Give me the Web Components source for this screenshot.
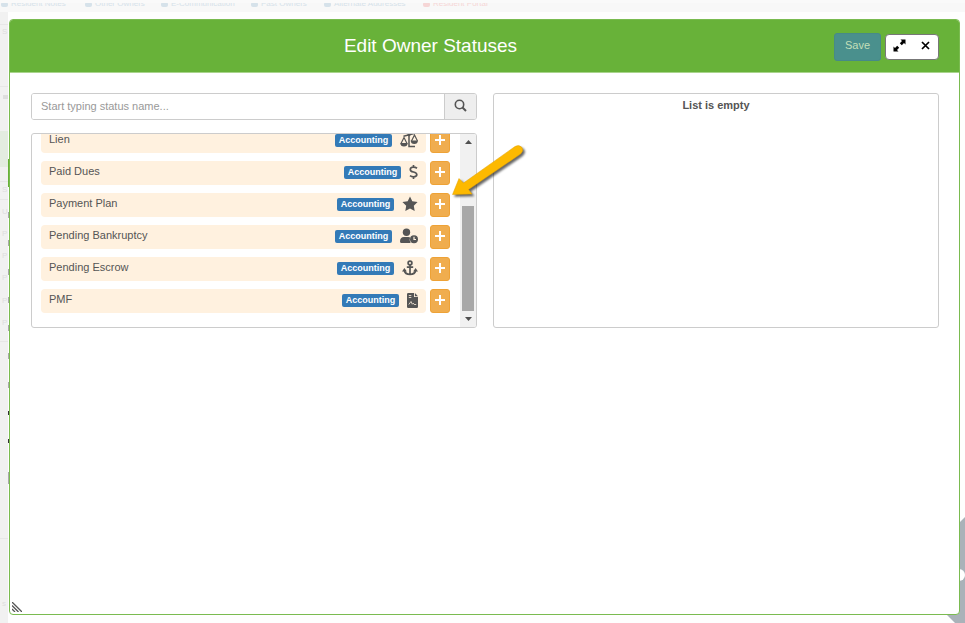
<!DOCTYPE html>
<html lang="en">
<head>
<meta charset="utf-8">
<title>Edit Owner Statuses</title>
<style>
	html, body {
		height: 100%;
		margin: 0;
	}

	body {
		position: relative;
		overflow: hidden;
		background: #f1f1f1;
		color: #555;
		font: 11px/16px "Liberation Sans", sans-serif;
	}

	.column {
		display: grid;
		gap: 13px;
	}
</style>
</head>
<body>

<template id="page-backdrop-tmpl">
	<style>
		:host {
			position: absolute;
			inset: 0;
			overflow: hidden;
			font: 8px/8px "Liberation Sans", sans-serif;
			color: #d6e2ea;
		}

		nav {
			position: absolute;
			left: 0;
			right: 0;
			top: 0;
			height: 12px;
			background: #f8f8f8;
		}

		nav::after {
			content: "";
			position: absolute;
			left: 0;
			right: 0;
			top: 0;
			height: 3px;
			background: #fafafa;
		}

		nav span {
			position: absolute;
			top: 0;
			white-space: nowrap;
		}

		nav span::before {
			content: "";
			position: absolute;
			left: -10px;
			top: 2px;
			width: 7px;
			height: 5px;
			border-radius: 2px;
			background: currentColor;
		}

		nav .red {
			color: #f6d6d6;
		}

		.sheet {
			position: absolute;
			left: 8px;
			right: 0;
			top: 12px;
			bottom: 0;
			background: #fefefe;
		}

		.letters span {
			position: absolute;
			left: 2px;
			color: #dedede;
		}

		svg {
			position: absolute;
			left: 0;
			top: 0;
		}

		.corner {
			left: auto;
			top: auto;
			right: 0;
			bottom: 0;
		}
	</style>

	<nav>
		<span style="left: 11px">Resident Notes</span>
		<span style="left: 95px">Other Owners</span>
		<span style="left: 171px">E-Communication</span>
		<span style="left: 261px">Past Owners</span>
		<span style="left: 334px">Alternate Addresses</span>
		<span class="red" style="left: 433px">Resident Portal</span>
	</nav>
	<div class="sheet"></div>
	<svg width="10" height="623" aria-hidden="true">
		<path fill="#e3ece0" d="M0 131h8v36H0z"/>
		<path fill="#68b239" d="M8 159h2v28H8z"/>
		<path fill="#e7e7e7" d="M0 24h8v1H0zM0 86h8v1H0zM0 181h8v1H0zM0 199h8v1H0zM0 341h8v1H0zM0 538h8v1H0z"/>
		<path fill="#dedede" d="M3 95h5v4H3z"/>
		<path fill="#aaa" d="M8 212h1v6H8zM8 240h1v6H8zM8 269h1v6H8zM8 297h1v6H8zM8 325h1v6H8zM8 353h1v6H8zM8 382h1v6H8zM8 472h1v12H8z"/>
		<path fill="#333" d="M8 411h1v4H8zM8 439h1v4H8z"/>
	</svg>
	<div class="letters">
		<span style="top: 28px">S</span>
		<span style="top: 186px">S</span>
		<span style="top: 208px">U</span>
		<span style="top: 230px">P</span>
		<span style="top: 252px">P</span>
		<span style="top: 274px">P</span>
		<span style="top: 297px">P</span>
		<span style="top: 319px">P</span>
		<span style="top: 600px">s</span>
	</div>
	<svg class="corner" width="20" height="108" aria-hidden="true">
		<path fill="#aab2b9" d="M20 2 0 22v76l10 10h10z"/>
		<circle cx="14" cy="60" r="6" fill="#fff"/>
	</svg>
</template>

<template id="status-dialog-tmpl">
	<style>
		:host {
			position: relative;
			display: flex;
			flex-direction: column;
			box-sizing: border-box;
			height: calc(100% - 27px);
			margin: 19px 5px 8px 9px;
			border: 1px solid #7abb50;
			border-radius: 4px;
			background: #fff;
			overflow: hidden;
		}

		header {
			display: flex;
			align-items: center;
			box-sizing: border-box;
			height: 53px;
			padding: 2px 20px 0 21px;
			gap: 4px;
			background: #68b239;
			border-bottom: 1px solid #a9d48c;
		}

		h1 {
			flex: 1;
			margin: 0;
			padding-bottom: 2px;
			color: #fff;
			font: 19px/24px "Liberation Sans", sans-serif;
			text-align: center;
		}

		button {
			border: 0;
			padding: 0;
			font: inherit;
		}

		.save {
			width: 47px;
			height: 28px;
			padding-bottom: 4px;
			border: 1px solid #478a88;
			border-radius: 3px;
			background: #4a908d;
			color: #c3dfb8;
		}

		.tools {
			display: flex;
			box-sizing: border-box;
			width: 54px;
			height: 26px;
			border: 1px solid #777;
			border-radius: 4px;
			background: #fff;
		}

		.tools button {
			flex: 1;
			background: none;
		}

		.tools svg {
			display: block;
			margin: -4px auto 0;
		}

		main {
			display: grid;
			grid-template-columns: 1fr 1fr;
			gap: 16px;
			padding: 20px 20px 20px 21px;
		}

		.grip {
			position: absolute;
			left: 2px;
			bottom: 2px;
		}
	</style>

	<header>
		<h1><slot name="title"></slot></h1>
		<button class="save" type="button" disabled>Save</button>
		<div class="tools">
			<button type="button" aria-label="Expand">
				<svg width="13" height="13" viewBox="0 0 13 13">
					<path d="M7.500.5h5v5L11 4 8.800 6.200 6.800 4.200 9 2zM5.500 12.500h-5v-5L2 9l2.200-2.200 2 2L4 11z"/>
				</svg>
			</button>
			<button type="button" aria-label="Close">
				<svg width="9" height="9" viewBox="0 0 9 9">
					<path stroke="#000" stroke-width="1.700" d="m1 1 7 7M8 1 1 8"/>
				</svg>
			</button>
		</div>
	</header>
	<main><slot></slot></main>
	<svg class="grip" width="10" height="10" aria-hidden="true">
		<path stroke="#555" stroke-width="1.300" d="M0 0l10 10M0 3.500 6.500 10M0 7l3 3"/>
	</svg>
</template>

<template id="status-search-tmpl">
	<style>
		:host {
			display: flex;
			box-sizing: border-box;
			height: 27px;
			border: 1px solid #ccc;
			border-radius: 3px;
			overflow: hidden;
		}

		input {
			flex: 1;
			min-width: 0;
			border: 0;
			padding: 0 9px 2px;
			outline: 0;
			color: #555;
			font: inherit;
		}

		input::placeholder {
			color: #999;
		}

		button {
			width: 32px;
			padding: 0;
			border: 0;
			border-left: 1px solid #ccc;
			background: #eee;
		}

		svg {
			display: block;
			margin: -2px auto 0;
		}
	</style>

	<input type="text" aria-label="Status name" placeholder="Start typing status name...">
	<button type="button" aria-label="Search">
		<svg width="13" height="13" viewBox="0 0 13 13" fill="none" stroke="#555">
			<circle cx="5.500" cy="5.500" r="4.200" stroke-width="1.600"/>
			<path stroke-width="2" d="m8.500 8.500 3.500 3.500"/>
		</svg>
	</button>
</template>

<template id="status-panel-tmpl">
	<style>
		:host {
			display: flex;
			box-sizing: border-box;
			height: 195px;
			border: 1px solid #ccc;
			border-radius: 3px;
			overflow: hidden;
		}

		:host([empty]) {
			height: auto;
			justify-content: center;
			padding-top: 3px;
			font-weight: bold;
		}

		.rows {
			flex: 1;
			display: flex;
			flex-direction: column;
			justify-content: flex-end;
			gap: 8px;
			padding: 0 10px 14px 9px;
		}

		.bar {
			display: flex;
			flex-direction: column;
			align-items: center;
			box-sizing: border-box;
			width: 16px;
			padding: 6px 0;
			background: #f1f1f1;
		}

		.thumb {
			width: 12px;
			height: 105px;
			margin: auto 0 6px;
			background: #a8a8a8;
		}

		:host([empty]) .rows {
			display: block;
			padding: 0;
			text-align: center;
		}

		:host([empty]) .bar {
			display: none;
		}
	</style>

	<div class="rows"><slot></slot></div>
	<div class="bar" aria-hidden="true">
		<svg width="7" height="4"><path fill="#505050" d="M0 4 3.500 0 7 4z"/></svg>
		<div class="thumb"></div>
		<svg width="7" height="4"><path fill="#505050" d="M0 0h7L3.500 4z"/></svg>
	</div>
</template>

<template id="status-row-tmpl">
	<style>
		:host {
			flex: none;
			display: flex;
			gap: 4px;
			height: 24px;
		}

		.item {
			flex: 1;
			display: flex;
			align-items: center;
			gap: 8px;
			padding: 0 8px 2px;
			border-radius: 4px;
			background: #fff1df;
		}

		.name {
			flex: 1;
			padding-bottom: 2px;
		}

		.badge {
			width: 57px;
			border-radius: 2px;
			background: #337ab7;
			color: #fff;
			font: bold 9px/13px "Liberation Sans", sans-serif;
			text-align: center;
		}

		.icon {
			display: flex;
			color: #555;
		}

		button {
			width: 20px;
			padding: 0;
			border: 1px solid #eea236;
			border-radius: 3px;
			background: #f0ad4e;
		}

		button svg {
			display: block;
			margin: -2px auto 0;
		}
	</style>

	<div class="item">
		<span class="name"><slot></slot></span>
		<span class="badge"></span>
		<span class="icon"></span>
	</div>
	<button type="button">
		<svg width="10" height="10"><path stroke="#fff" stroke-width="2" d="M5 0v10M0 5h10"/></svg>
	</button>
</template>

<template id="pointer-arrow-tmpl">
	<style>
		:host {
			position: absolute;
			left: 449px;
			top: 140px;
			pointer-events: none;
		}

		svg {
			display: block;
			filter: drop-shadow(2px 2px 1px rgba(0, 0, 0, .6));
		}
	</style>

	<svg width="80" height="64" aria-hidden="true">
		<path fill="#fdb900" stroke="#e0a000" stroke-width=".5" d="M3.500 54.500 10 38.500 14.500 43 66 6.500Q70 4 73 7.500 75 11 71.500 14L19.500 49.500 23 54z"/>
	</svg>
</template>

<page-backdrop></page-backdrop>
<status-dialog>
	<span slot="title">Edit Owner Statuses</span>
	<div class="column">
		<status-search></status-search>
		<status-panel>
			<status-row group="Accounting" icon="scale">Lien</status-row>
			<status-row group="Accounting" icon="dollar">Paid Dues</status-row>
			<status-row group="Accounting" icon="star">Payment Plan</status-row>
			<status-row group="Accounting" icon="clock">Pending Bankruptcy</status-row>
			<status-row group="Accounting" icon="anchor">Pending Escrow</status-row>
			<status-row group="Accounting" icon="file">PMF</status-row>
		</status-panel>
	</div>
	<status-panel empty>List is empty</status-panel>
</status-dialog>
<pointer-arrow></pointer-arrow>

<script>
	const ICONS = {
		scale: '<svg width="18" height="16" viewBox="0 0 18 16" fill="none" stroke="currentColor"><path stroke-width="1.500" d="M3.500 4.200 14 1.600M9 3v11.500h6"/><circle cx="9" cy="2.800" r="1.500" fill="currentColor" stroke="none"/><path stroke-width="1.200" d="M1 11.500 4 5.500l3 6M11.500 9l3-6 3 6"/><path fill="currentColor" stroke="none" d="M.2 11h7.600Q7.500 14.500 4 14.500T.2 11zM10.600 8.500h7.400q-.3 3.500-3.700 3.500t-3.700-3.500z"/></svg>',
		dollar: '<svg width="9" height="16" viewBox="0 0 9 16" fill="none" stroke="currentColor" stroke-width="1.700"><path d="M4.500 1v2.500M4.500 12.500V15M8 4.300Q6.500 3.200 4.500 3.200 1.300 3.200 1.300 5.400 1.300 7.300 4.500 8T7.800 10.500Q7.800 12.800 4.500 12.800 2.500 12.800 1 11.600"/></svg>',
		star: '<svg width="16" height="16" viewBox="0 0 16 16" fill="currentColor"><path d="m8 .5 2.300 4.800 5.300.8-3.800 3.700.9 5.300L8 12.600l-4.700 2.500.9-5.300L.4 6.100l5.300-.8z"/></svg>',
		clock: '<svg width="18" height="16" viewBox="0 0 18 16" fill="currentColor"><circle cx="6.500" cy="4.300" r="3.700"/><path d="M0 13.500Q0 9 4 9h4.500q1 0 1.600.4-1.300 3 .5 5.600H1.500Q0 15 0 13.500z"/><circle cx="14" cy="11.300" r="4"/><path fill="none" stroke="#fff1df" stroke-width="1.200" d="M14 8.800v2.700h2"/></svg>',
		anchor: '<svg width="16" height="16" viewBox="0 0 16 16" fill="none" stroke="currentColor" stroke-width="1.700"><circle cx="8" cy="3" r="1.900"/><path d="M8 5v9.500M4.800 7.200h6.400M2.400 10.500Q3 14.300 8 14.300t5.600-3.800"/><path fill="currentColor" stroke="none" d="M0 11.500 2.400 8l2.500 3.500zM11.100 11.500 13.600 8l2.400 3.500z"/></svg>',
		file: '<svg width="11" height="15" viewBox="0 0 11 15" fill="currentColor"><path d="M1.200 0H7v4h4v9.800q0 1.200-1.200 1.200H1.200Q0 15 0 13.800V1.200Q0 0 1.200 0z"/><path d="M7.900 0 11 3.200H7.900z"/><path fill="none" stroke="#fff1df" stroke-width=".8" d="M1.800 2.500h2.500M1.800 4.500h2.500M1.800 11.500 4 8.500l1.300 2.700 1-1 .9 1.300h2"/></svg>'
	};

	class TemplateElem extends HTMLElement {
		constructor () {
			super();

			this.attachShadow({mode: 'open'})
				.appendChild(this.template);
		}

		get template () {
			return document.querySelector('#' + this.localName + '-tmpl')
				.content
				.cloneNode(true);
		}
	}

	class StatusRow extends TemplateElem {
		connectedCallback () {
			const root = this.shadowRoot;

			root.querySelector('.badge').textContent = this.getAttribute('group');
			root.querySelector('.icon').innerHTML = ICONS[this.getAttribute('icon')];
			root.querySelector('button').setAttribute('aria-label', 'Add ' + this.textContent);
		}
	}

	customElements.define('page-backdrop', class extends TemplateElem {});
	customElements.define('status-dialog', class extends TemplateElem {});
	customElements.define('status-search', class extends TemplateElem {});
	customElements.define('status-panel', class extends TemplateElem {});
	customElements.define('status-row', StatusRow);
	customElements.define('pointer-arrow', class extends TemplateElem {});
</script>
</body>
</html>
